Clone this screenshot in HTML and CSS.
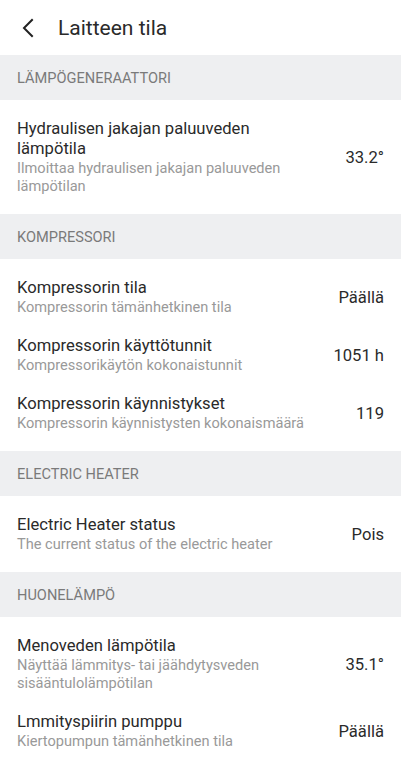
FILE: index.html
```html
<!DOCTYPE html>
<html lang="fi">
<head>
  <meta charset="UTF-8">
  <meta name="viewport" content="width=device-width, initial-scale=1.0">
  <title>Laitteen tila</title>
  <link rel="stylesheet" href="styles.css">
</head>
<body>
  <header class="topbar">
    <button class="back" aria-label="Takaisin">
      <svg width="14" height="22" viewBox="0 0 14 22"><path d="M11 3 L3 11 L11 19" fill="none" stroke="#222" stroke-width="2" stroke-linecap="square"/></svg>
    </button>
    <h1>Laitteen tila</h1>
  </header>

  <section>
    <h2 class="section-title">Lämpögeneraattori</h2>
    <ul class="list">
      <li class="row">
        <div class="text">
          <div class="title">Hydraulisen jakajan paluuveden lämpötila</div>
          <div class="desc">Ilmoittaa hydraulisen jakajan paluuveden lämpötilan</div>
        </div>
        <div class="value">33.2°</div>
      </li>
    </ul>
  </section>

  <section>
    <h2 class="section-title">Kompressori</h2>
    <ul class="list">
      <li class="row">
        <div class="text">
          <div class="title">Kompressorin tila</div>
          <div class="desc">Kompressorin tämänhetkinen tila</div>
        </div>
        <div class="value">Päällä</div>
      </li>
      <li class="row">
        <div class="text">
          <div class="title">Kompressorin käyttötunnit</div>
          <div class="desc">Kompressorikäytön kokonaistunnit</div>
        </div>
        <div class="value">1051 h</div>
      </li>
      <li class="row">
        <div class="text">
          <div class="title">Kompressorin käynnistykset</div>
          <div class="desc">Kompressorin käynnistysten kokonaismäärä</div>
        </div>
        <div class="value">119</div>
      </li>
    </ul>
  </section>

  <section>
    <h2 class="section-title">Electric Heater</h2>
    <ul class="list">
      <li class="row">
        <div class="text">
          <div class="title">Electric Heater status</div>
          <div class="desc">The current status of the electric heater</div>
        </div>
        <div class="value">Pois</div>
      </li>
    </ul>
  </section>

  <section>
    <h2 class="section-title">Huonelämpö</h2>
    <ul class="list">
      <li class="row">
        <div class="text">
          <div class="title">Menoveden lämpötila</div>
          <div class="desc">Näyttää lämmitys- tai jäähdytysveden sisääntulolämpötilan</div>
        </div>
        <div class="value">35.1°</div>
      </li>
      <li class="row">
        <div class="text">
          <div class="title">Lmmityspiirin pumppu</div>
          <div class="desc">Kiertopumpun tämänhetkinen tila</div>
        </div>
        <div class="value">Päällä</div>
      </li>
    </ul>
  </section>
  <div class="section-title tail"></div>
</body>
</html>
```

FILE: styles.css
```css
/* Page */
body {
  margin: 0;
  background: #fff;
  font-family: Roboto, "Noto Sans", Arial, sans-serif;
  color: #222;
}

.topbar {
  height: 55px;
  display: flex;
  align-items: center;
  padding: 0 16px;
  box-sizing: border-box;
}

.back {
  background: none;
  border: none;
  padding: 0;
  margin: 0 23px 0 5px;
  display: flex;
  align-items: center;
}

.topbar h1 {
  margin: 0;
  font-size: 21px;
  font-weight: 400;
  color: #2a2a2a;
}

.section-title {
  margin: 0;
  height: 45px;
  display: flex;
  align-items: center;
  padding: 1px 17px 0;
  box-sizing: border-box;
  background: #eeeff1;
  font-size: 14.6px;
  font-weight: 400;
  text-transform: uppercase;
  color: #7a7a7a;
}

.tail {
  height: 10px;
}

.list {
  list-style: none;
  margin: 0;
  padding: 9px 0;
}

.row {
  display: flex;
  align-items: center;
  gap: 16px;
  padding: 10px 17px;
}

.text {
  flex: 1;
  min-width: 0;
  padding-right: 16px;
}

.title {
  font-size: 16.6px;
  line-height: 20px;
  color: #2a2a2a;
}

.desc {
  font-size: 14.6px;
  line-height: 18px;
  color: #999;
}

.value {
  font-size: 16.6px;
  color: #2a2a2a;
  white-space: nowrap;
}
```
